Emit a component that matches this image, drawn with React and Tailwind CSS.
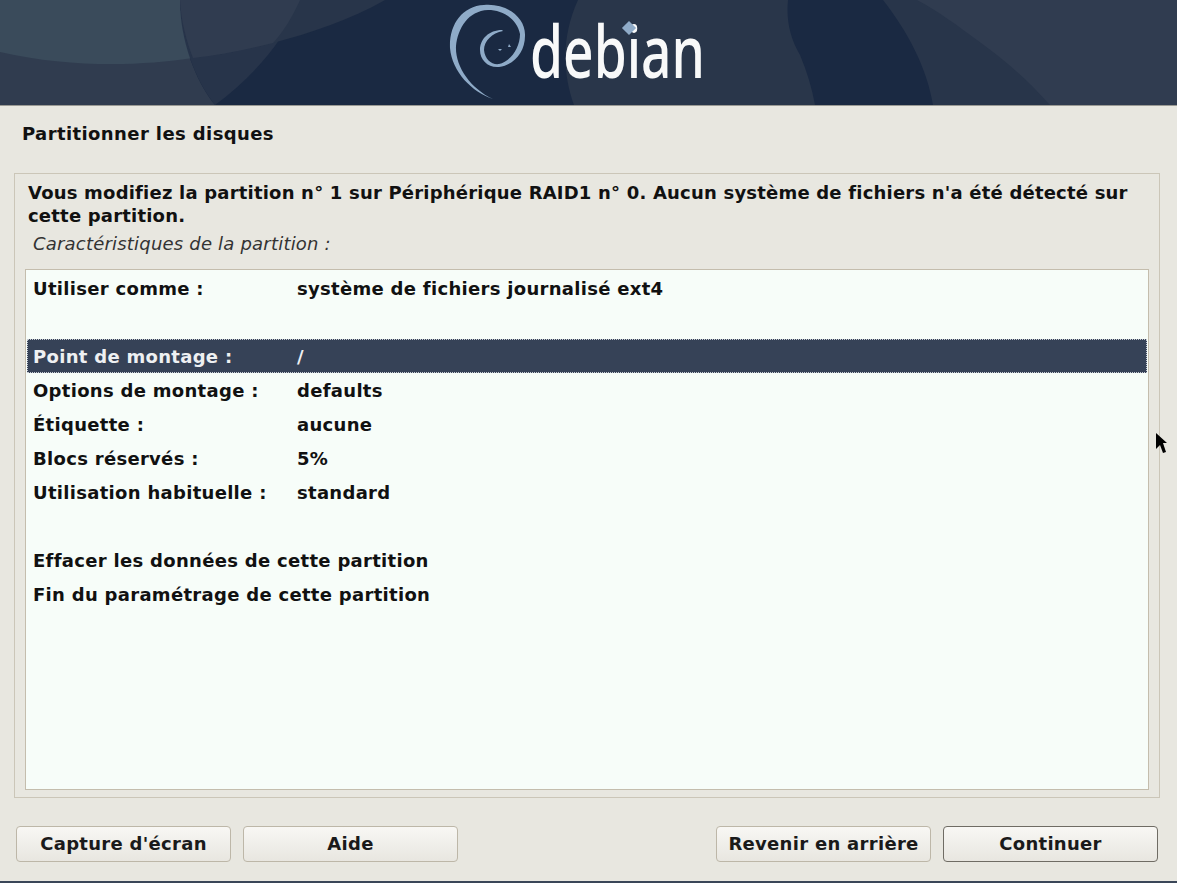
const rows = [
  ["Utiliser comme :", "système de fichiers journalisé ext4"],
  null,
  ["Point de montage :", "/", true],
  ["Options de montage :", "defaults"],
  ["Étiquette :", "aucune"],
  ["Blocs réservés :", "5%"],
  ["Utilisation habituelle :", "standard"],
  null,
  ["Effacer les données de cette partition", ""],
  ["Fin du paramétrage de cette partition", ""],
];

function Banner() {
  return (
    <div className="relative h-[105px] overflow-hidden bg-[#1a2942]">
      <svg className="absolute inset-0" width="1177" height="105" viewBox="0 0 1177 105">
        <path d="M0 0H180C180 40 195 80 215 105H0Z" fill="#303c4f" />
        <path d="M0 0H180C181 20 186 40 193 58C140 66 70 68 0 52Z" fill="#3a4b5b" />
        <path d="M180 0H300C285 40 255 75 215 105C195 80 180 40 180 0Z" fill="#27344a" />
        <path d="M180 0H385C350 20 310 33 273 43C245 50 220 55 193 58C186 40 181 20 180 0Z" fill="#28354a" />
        <path d="M180 0H300C292 18 283 32 273 43C245 50 220 55 193 58C186 40 181 20 180 0Z" fill="#303c50" />
        <path d="M578 0H788C786 20 790 38 800 55C807 72 812 88 815 105H574C562 72 562 35 578 0Z" fill="#29364a" />
        <path d="M883 0H1177V105H933C927 68 908 32 883 0Z" fill="#28354a" />
        <path d="M917 0H1177V105H1050C1030 82 1005 60 977 40C958 26 938 11 917 0Z" fill="#303c50" />
      </svg>
      <svg className="absolute left-[446px] top-0" width="90" height="105" viewBox="446 0 90 105">
        <path
          d="M493 99C472 92 452 72 450 48C449 25 462 6 484 5C506 3 526 17 525 36C525 52 514 65 499 67C488 68 480 60 480 50C480 39 489 30 502 30L503 31C492 33 484 41 484 50C485 60 492 65 499 64C510 62 520 48 520 34C517 19 503 10 488 10C468 11 458 28 456 46C455 66 470 88 493 99Z"
          fill="#8fabc8"
        />
        <path d="M498 49L502 49L500 51ZM509 44L511 47L508 47Z" fill="#8fabc8" />
      </svg>
      <div
        className="absolute left-[530px] top-[7px] origin-left scale-x-[0.73] text-[73px] font-medium leading-[86px] text-[#f8f9f9]"
        style={{ fontFamily: '"Noto Sans", sans-serif' }}
      >
        debian
      </div>
      <div className="absolute left-[624px] top-[23px] h-[10px] w-[10px] rotate-45 bg-[#8fabc8]" />
    </div>
  );
}

function Button({ label, className = "" }) {
  return (
    <button
      className={`h-[36px] w-[215px] rounded-[4px] border bg-linear-to-b from-[#f8f7f4] to-[#e8e6e0] text-[18px] font-bold leading-none tracking-[0.3px] text-[#1a1a1a] ${className}`}
    >
      {label}
    </button>
  );
}

export default function App() {
  return (
    <div
      className="relative flex h-[883px] w-[1177px] flex-col overflow-hidden bg-[#e8e7e0] text-[#111]"
      style={{ fontFamily: '"DejaVu Sans", sans-serif' }}
    >
      <Banner />
      <div className="h-px bg-[#9a9a94]" />
      <div className="px-[22px] pt-[17px] text-[18px] font-bold leading-[22px] tracking-[0.4px]">Partitionner les disques</div>
      <div className="ml-[14px] mt-[28px] flex h-[625px] w-[1146px] flex-col border border-[#cbc6b8] px-[10px] pb-[7px] pt-[7px]">
        <div className="px-[3px] text-[18px] font-bold leading-[23px] tracking-[0.2px]">
          Vous modifiez la partition n° 1 sur Périphérique RAID1 n° 0. Aucun système de fichiers n'a été détecté sur cette partition.
        </div>
        <div className="mt-[7px] px-[8px] text-[18px] italic leading-[20px] tracking-[0.2px] text-[#333]">Caractéristiques de la partition :</div>
        <div className="mt-[15px] flex-1 border border-[#c4bdad] bg-[#f7fdf9] pt-px">
          {rows.map((r, i) =>
            r ? (
              <div
                key={i}
                className={`mx-px flex h-[34px] items-center px-[5px] text-[18px] font-bold tracking-[0.3px] ${r[2] ? "border border-dotted border-[#c8ccd4] bg-[#364257] text-[#eef0f2]" : "border border-transparent"}`}
              >
                <span className="w-[264px] shrink-0 whitespace-nowrap">{r[0]}</span>
                <span className="whitespace-nowrap">{r[1]}</span>
              </div>
            ) : (
              <div key={i} className="h-[34px]" />
            )
          )}
        </div>
      </div>
      <div className="flex pl-[16px] pr-[19px] pt-[28px]">
        <Button label="Capture d'écran" className="border-[#bdb7a8]" />
        <Button label="Aide" className="ml-[12px] border-[#bdb7a8]" />
        <Button label="Revenir en arrière" className="ml-auto border-[#bdb7a8]" />
        <Button label="Continuer" className="ml-[12px] border-[#6f6c64]" />
      </div>
      <div className="mt-auto h-[2px] bg-[#3a4658]" />
      <svg className="absolute left-[1155px] top-[432px]" width="14" height="22" viewBox="0 0 14 22">
        <path d="M1 1L12 11L8 11L11 20L8 21L5 13L1 17Z" fill="#000" />
      </svg>
    </div>
  );
}
